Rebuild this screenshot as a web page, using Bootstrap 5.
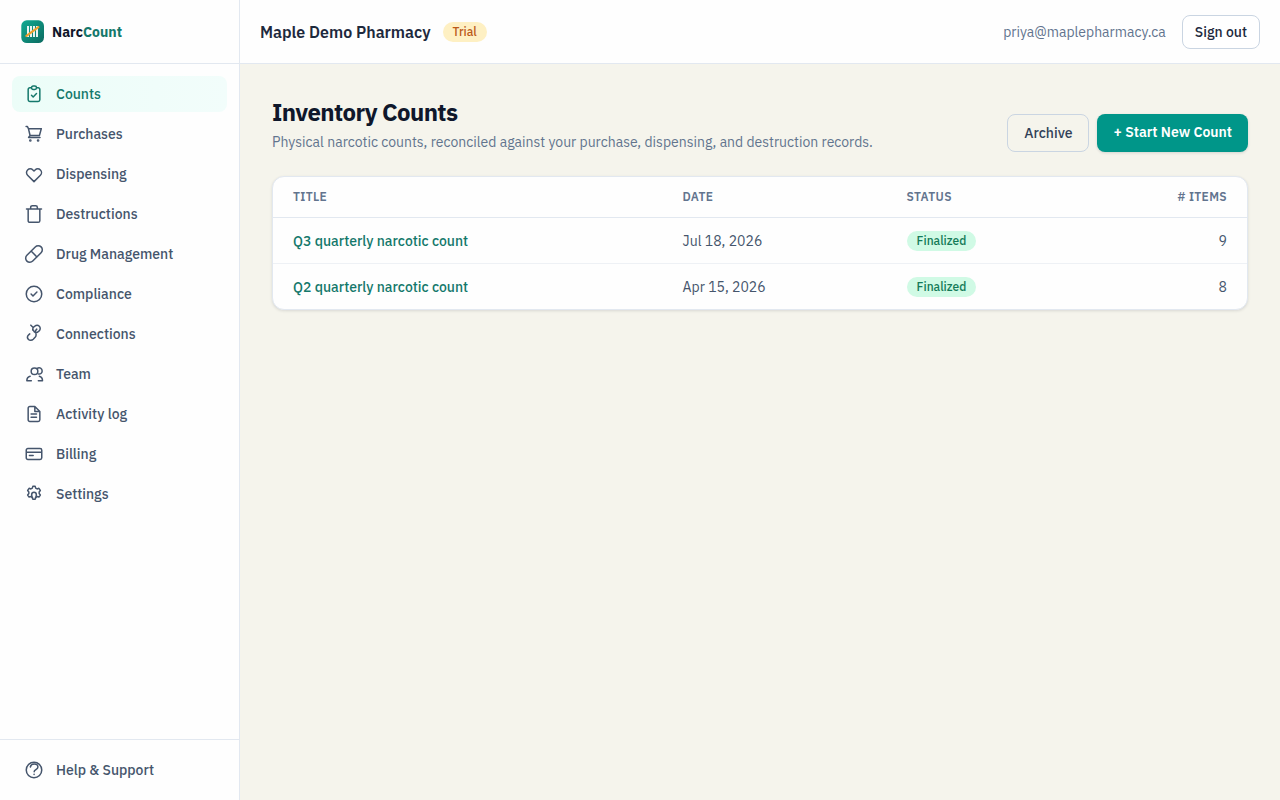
<!DOCTYPE html>
<html lang="en">
<head>
<meta charset="utf-8">
<meta name="viewport" content="width=device-width, initial-scale=1">
<title>Inventory Counts – NarcCount</title>
<link href="https://cdn.jsdelivr.net/npm/bootstrap@5.3.0/dist/css/bootstrap.min.css" rel="stylesheet">
<style>
  :root {
    --ink: #0f172b; --slate-7: #314158; --slate-6: #45556c; --slate-5: #62748e;
    --line: #e2e8f0; --line-strong: #cad5e2; --teal: #009689; --teal-dark: #14786b;
  }
  body { font-family: "IBM Plex Sans", Roboto, sans-serif; font-size: 14px; line-height: 20px; background: #f5f4ec; color: var(--slate-6); }
  a { text-decoration: none; }
  .side { width: 240px; background: #fefefe; border-right: 1px solid var(--line); }
  .bar { height: 64px; border-bottom: 1px solid var(--line); background: #fefefe; padding: 0 20px; }
  .brand { color: var(--ink); font-weight: 700; }
  .brand span { color: var(--teal-dark); }
  .side .nav { padding: 12px; gap: 4px; }
  .side .nav-link { display: flex; align-items: center; gap: 12px; padding: 8px 12px; border-radius: 8px; color: var(--slate-6); font-weight: 500; }
  .side .nav-link:hover { background: #f8fafc; }
  .side .nav-link.active { color: var(--teal-dark); background: linear-gradient(90deg, #ecfdf8, #f2fdfb); }
  .side .nav-link svg { width: 20px; height: 20px; flex: none; fill: none; stroke: currentColor; stroke-width: 1.8; stroke-linecap: round; stroke-linejoin: round; }
  .side-foot { border-top: 1px solid var(--line); }
  .org-row { gap: 12px; }
  .org { font-size: 16px; font-weight: 600; color: #1d293d; }
  .mail { color: var(--slate-5); }
  .pill { font-size: 12px; line-height: 16px; font-weight: 500; padding: 2px 10px; }
  .pill-trial { background: #fef0c3; color: #bb5a18; }
  .pill-done { background: #d0fae5; color: #147a58; }
  .btn { font-size: 14px; line-height: 20px; font-weight: 500; border-radius: 8px; padding: 8px 16px; }
  .btn-line { color: var(--slate-7); border-color: var(--line-strong); }
  .btn-line:hover { background: #f8fafc; border-color: var(--line-strong); }
  .btn-out { padding: 6px 12px; background: #fff; color: #1d293d; }
  .btn-go { background: var(--teal); color: #fff; font-weight: 600; border: 0; padding: 8px 16px 10px; box-shadow: 0 1px 3px rgba(15,23,43,.14); }
  .btn-go:hover { background: var(--teal-dark); color: #fff; }
  main { padding: 32px; }
  h1 { font-size: 24px; line-height: 32px; font-weight: 700; letter-spacing: -.025em; color: var(--ink); }
  .sub { color: var(--slate-5); }
  .panel { border: 1px solid var(--line); border-radius: 12px; background: #fefefe; overflow: hidden; box-shadow: 0 1px 3px rgba(15,23,43,.12); }
  .counts { --bs-table-bg: transparent; --bs-table-color: var(--slate-6); color: var(--slate-6); }
  .counts th { font-size: 12px; line-height: 16px; font-weight: 600; letter-spacing: .03em; text-transform: uppercase; padding: 12px 20px; color: var(--slate-5); border-color: var(--line); }
  .counts td { padding: 13px 20px 12px; border-color: #eef1f5; vertical-align: middle; }
  .counts tbody tr:last-child td { border-bottom: 0; }
  .counts a { color: var(--teal-dark); font-weight: 500; }
  .counts .pill { display: block; width: max-content; }
  .c-title { width: 40%; } .c-mid { width: 23%; }
</style>
</head>
<body>
<div class="d-flex min-vh-100">
  <aside class="side d-flex flex-column flex-shrink-0">
    <div class="bar d-flex align-items-center flex-shrink-0">
      <a class="brand d-flex align-items-center gap-2" href="#">
        <svg width="24" height="24" viewBox="0 0 24 24" aria-hidden="true">
          <defs><linearGradient id="lg" x1="0" y1="0" x2="1" y2="1"><stop offset="0" stop-color="#10ab92"/><stop offset="1" stop-color="#0c6a60"/></linearGradient></defs>
          <rect x="1.3" y=".3" width="22.7" height="22.7" rx="5.5" fill="url(#lg)"/>
          <path d="M8 6v11M11 6v11M14 6v11M17 6v11" stroke="#fff" stroke-width="1.800"/>
          <path d="M6.400 15.800 18.400 7.200" stroke="#eda02c" stroke-width="2.200" stroke-linecap="round"/>
        </svg>
        <div>Narc<span>Count</span></div>
      </a>
    </div>
    <nav class="nav flex-column flex-nowrap flex-grow-1" aria-label="Main">
      <a class="nav-link active" aria-current="page" href="#"><svg viewBox="0 0 24 24"><path d="M9 4.500H7a2 2 0 0 0-2 2V19a2 2 0 0 0 2 2h10a2 2 0 0 0 2-2V6.500a2 2 0 0 0-2-2h-2M9 4.500a2 2 0 0 0 2 2h2a2 2 0 0 0 2-2M9 4.500a2 2 0 0 1 2-2h2a2 2 0 0 1 2 2m-6 9 2 2 4-4"/></svg>Counts</a>
      <a class="nav-link" href="#"><svg viewBox="0 0 24 24"><path d="M2.500 3h1.600l1.200 2.600M5.300 5.600l2 8.200h11.200l2.300-8.200H5.300M7.300 13.800l-1.800 2.400h13.700"/><circle cx="7.600" cy="19.800" r=".7"/><circle cx="16.900" cy="19.800" r=".7"/></svg>Purchases</a>
      <a class="nav-link" href="#"><svg viewBox="0 0 24 24"><path d="M4.318 7.100a4.500 4.500 0 0 0 0 6.364L12 21.146l7.682-7.682a4.500 4.500 0 0 0-6.364-6.364L12 8.418 10.682 7.100a4.500 4.500 0 0 0-6.364 0z"/></svg>Dispensing</a>
      <a class="nav-link" href="#"><svg viewBox="0 0 24 24"><path d="M3 6h18M19 6v14a2 2 0 0 1-2 2H7a2 2 0 0 1-2-2V6M8 6V4a2 2 0 0 1 2-2h4a2 2 0 0 1 2 2v2"/></svg>Destructions</a>
      <a class="nav-link" href="#"><svg viewBox="0 0 24 24"><path d="m10.500 20.500 10-10a4.950 4.950 0 1 0-7-7l-10 10a4.950 4.950 0 1 0 7 7ZM8.500 8.500l7 7"/></svg>Drug Management</a>
      <a class="nav-link" href="#"><svg viewBox="0 0 24 24"><path d="m8.500 12 2.300 2.300 4.700-4.600"/><circle cx="12" cy="12" r="9.300"/></svg>Compliance</a>
      <a class="nav-link" href="#"><svg viewBox="0 0 24 24"><path d="M8.200 1.400 11 4.200M10.600 7.400c-.5-2 .4-3.600 2-4.600C14.500 1.500 17 1.400 18.400 2.800c1.500 1.500 1.300 3.900 0 5.200-1.500 1.500-3.400 2.800-4.900 2.300-1.200-.4-2-1.500-2-2.700M15.300 6.200c-1.400 1.200-2 2.500-1.300 4.200.9 2.200.9 3.800-.7 5.600l-2.200 2.300c-1.600 1.600-4.200 1.800-5.700.3-1.600-1.600-1.400-4 .2-5.600l1.300-1.100"/></svg>Connections</a>
      <a class="nav-link" href="#"><svg viewBox="0 0 24 24"><circle cx="12.600" cy="8.700" r="4"/><path d="M15.800 5.200c3-2 6 .2 6 3.200 0 2.500-2.200 4.300-4.600 3.500M7.400 14.700c-2.600.7-4 2.600-4 5.400h5.400M18.400 14.700c2.600.7 3.800 2.600 3.800 5.400h-5"/></svg>Team</a>
      <a class="nav-link" href="#"><svg viewBox="0 0 24 24"><path d="M8.500 12h6.500m-6.500 4h6.500m2 5H7a2 2 0 0 1-2-2V5a2 2 0 0 1 2-2h6l6 6v10a2 2 0 0 1-2 2zM13 3v6h6"/></svg>Activity log</a>
      <a class="nav-link" href="#"><svg viewBox="0 0 24 24"><path d="M4.700 5.500h14.600a2 2 0 0 1 2 2v9a2 2 0 0 1-2 2H4.700a2 2 0 0 1-2-2v-9a2 2 0 0 1 2-2zM3 10h18M6.500 13.800h4.500"/></svg>Billing</a>
      <a class="nav-link" href="#"><svg viewBox="0 0 24 24"><path d="M10.600 2.800h2.800l.6 2.200 1.700.9 2.200-.7 1.700 2.500-1.400 1.800v2l1.400 1.700-1.700 2.500-2.200-.6-1.500.9-.8 2.200h-2.800l-.8-2.200-1.500-.9-2.200.6-1.700-2.500 1.400-1.700v-2L4.400 7.700l1.700-2.500 2.200.7L10 5z"/><path d="M10.200 16.500c-.8-1-1-2.200-1-3.700a2.800 2.800 0 0 1 5.600 0c0 1.500-.2 2.700-1 3.700"/></svg>Settings</a>
    </nav>
    <div class="side-foot nav flex-column">
      <a class="nav-link" href="#"><svg viewBox="0 0 24 24"><circle cx="12" cy="12" r="9.300"/><path d="M7.600 8.400C8.100 5.900 9.900 4.800 12.200 4.800c2.600 0 4.500 1.500 4.500 3.700 0 3.200-4.500 3.100-4.500 5.700M12.100 17.200v.1"/></svg>Help &amp; Support</a>
    </div>
  </aside>
  <div class="flex-grow-1">
    <header class="bar d-flex align-items-center justify-content-between">
      <div class="org-row d-flex align-items-center">
        <div class="org">Maple Demo Pharmacy</div>
        <span class="pill pill-trial rounded-pill">Trial</span>
      </div>
      <div class="d-flex align-items-center gap-3">
        <span class="mail">priya@maplepharmacy.ca</span>
        <button type="button" class="btn btn-line btn-out">Sign out</button>
      </div>
    </header>
    <main>
      <div class="d-flex align-items-end justify-content-between gap-3 mb-4">
        <div>
          <h1 class="mb-1">Inventory Counts</h1>
          <p class="sub mb-0">Physical narcotic counts, reconciled against your purchase, dispensing, and destruction records.</p>
        </div>
        <div class="d-flex gap-2 flex-shrink-0">
          <button type="button" class="btn btn-line">Archive</button>
          <button type="button" class="btn btn-go">+ Start New Count</button>
        </div>
      </div>
      <div class="panel">
        <table class="table counts mb-0">
          <thead>
            <tr><th scope="col" class="c-title">Title</th><th scope="col" class="c-mid">Date</th><th scope="col" class="c-mid">Status</th><th scope="col" class="text-end"># Items</th></tr>
          </thead>
          <tbody>
            <tr><td><a href="#">Q3 quarterly narcotic count</a></td><td>Jul 18, 2026</td><td><span class="pill pill-done rounded-pill">Finalized</span></td><td class="text-end">9</td></tr>
            <tr><td><a href="#">Q2 quarterly narcotic count</a></td><td>Apr 15, 2026</td><td><span class="pill pill-done rounded-pill">Finalized</span></td><td class="text-end">8</td></tr>
          </tbody>
        </table>
      </div>
    </main>
  </div>
</div>
<script src="https://cdn.jsdelivr.net/npm/bootstrap@5.3.0/dist/js/bootstrap.bundle.min.js"></script>
</body>
</html>
